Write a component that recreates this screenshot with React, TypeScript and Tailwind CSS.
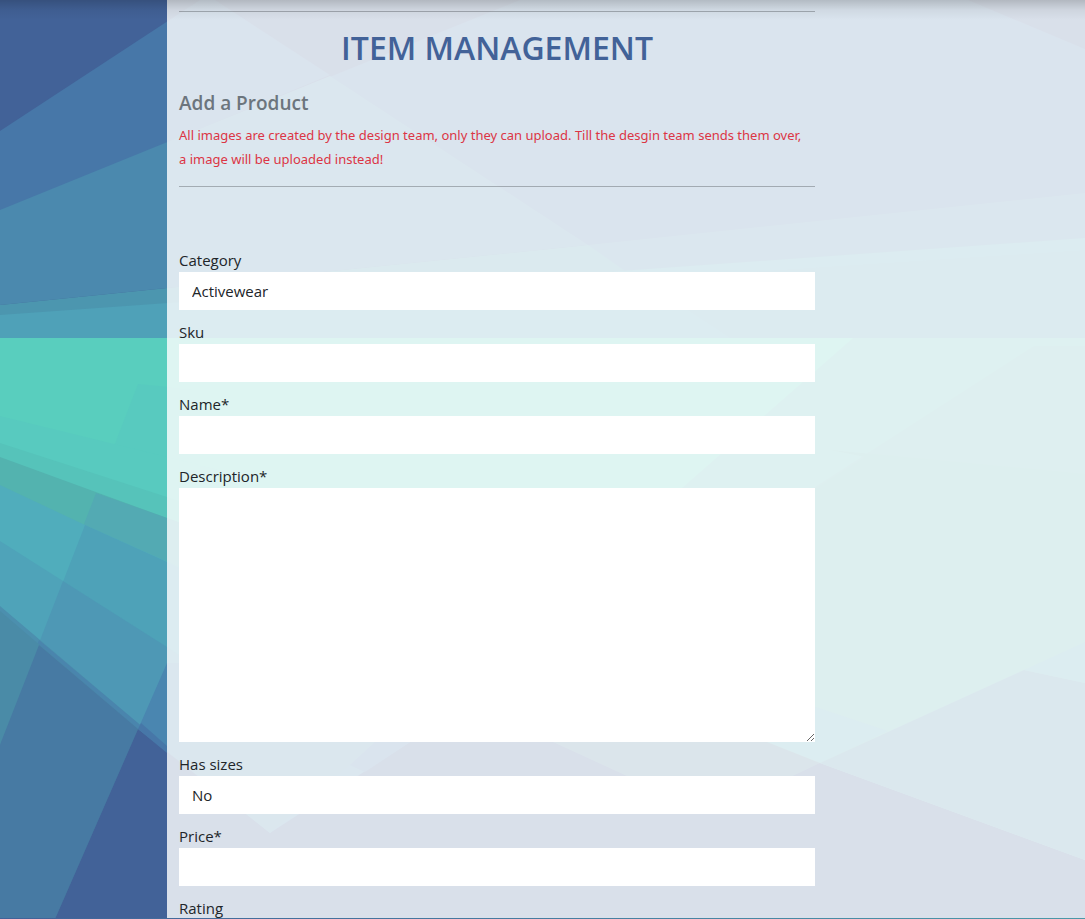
import type { ReactNode } from "react";

const shards: [string, string][] = [
  // upper fan
  ["#426298", "0,0 1085,0 1085,340 0,340"],
  ["#4777a8", "0,131 200,0 215,0 330,75 0,212"],
  ["#4777a8", "520,0 968,0 1085,49 1085,340 730,340 327,78"],
  ["#4b89ae", "0,210 330,76 588,245 0,305"],
  ["#4c89ae", "588,245 1085,193 1085,240 615,272"],
  ["#4c96af", "0,305 588,245 625,271 0,316"],
  ["#4fa1b8", "0,315 1085,238 1085,338 0,338"],
  ["#4f9cb6", "640,279 1085,250 1085,338 730,338"],
  // green core
  ["#59cebe", "0,338 1085,338 1085,919 0,919"],
  ["#5bbbb8", "853,338 1085,338 1085,919 600,919 600,560"],
  ["#5aafb2", "1034,346 1085,346 1085,919 500,919 500,690"],
  ["#57aeb0", "830,450 1085,474 1085,919 500,919 500,690 865,457"],
  // lower left rays
  ["#58cabf", "138,384 200,390 200,600 51,610"],
  ["#58cabf", "0,416 167,457 250,477 250,600 0,600"],
  ["#56c3ba", "0,443 167,497 250,524 250,600 0,600"],
  ["#53b3af", "0,457 167,518 500,640 500,919 0,919"],
  ["#53aab3", "96,493 167,518 500,640 500,919 -68,919"],
  ["#50adbc", "0,485 85,525 500,710 500,919 0,919"],
  ["#4ea2b8", "85,525 167,562 500,710 500,919 -68,919"],
  ["#4fa3b9", "0,541 63,581 500,859 500,919 0,919"],
  ["#4e98b5", "63,581 167,647 500,859 500,919 -68,919"],
  ["#4a86b0", "167,663 500,663 500,919 55,919"],
  ["#4c8fae", "0,606 139,724 272,836 272,919 0,919"],
  ["#4a85ad", "39,640 139,724 272,836 272,919 -68,919"],
  ["#4a8ba7", "0,611 138,729 270,833 270,919 0,919"],
  ["#477aa3", "39,645 138,729 55,919 -68,919"],
  ["#426298", "138,729 270,833 410,742 553,742 820,763 1085,860 1085,919 55,919"],
  // lower right
  ["#4b87ab", "270,833 190,768 190,742 410,742 365,771 350,765"],
  ["#4777a8", "138,729 141,723 167,746 167,753"],
  ["#4777a8", "410,742 365,772 350,765 375,742"],
  ["#57adae", "816,618 1024,670 820,763 767,700"],
  ["#50a4b8", "816,707 888,731 820,763 767,742"],
  ["#4d7f9b", "553,742 767,742 820,763 780,782 640,782"],
  ["#4d8bac", "1024,670 1085,683 1085,860 820,763"],
  ["#50a4b8", "1085,642 1085,683 1024,670"],
];

function Backdrop() {
  return (
    <svg
      aria-hidden="true"
      className="absolute inset-0 h-full w-full"
      viewBox="0 0 1085 919"
      preserveAspectRatio="none"
    >
      {shards.map(([fill, points], i) => (
        <polygon key={i} fill={fill} points={points} />
      ))}
    </svg>
  );
}

const control =
  "block w-full appearance-none rounded-none bg-white px-[13px] text-[#212529] outline-none";

function Field({ id, label, children }: { id: string; label: string; children: ReactNode }) {
  return (
    <div className="mb-[10px]">
      <label htmlFor={id} className="block">
        {label}
      </label>
      {children}
    </div>
  );
}

export default function App() {
  return (
    <div className="relative flex h-screen flex-col overflow-hidden font-['Open_Sans',sans-serif] text-[15px] leading-6 text-[#212529]">
      <Backdrop />
      <main className="relative ml-[167px] min-h-0 flex-1 overflow-hidden bg-white/80">
        <div className="max-w-[660px] px-3 pt-[11px]">
          <hr className="border-[#212529]/30" />
          <h1 className="mt-4 text-center text-[32px] leading-10 font-semibold text-[#426298]">
            ITEM MANAGEMENT
          </h1>
          <h2 className="mt-[23px] text-[19px] leading-6 font-semibold text-[#6c757d]">
            Add a Product
          </h2>
          <p className="mt-2 font-['Noto_Sans',sans-serif] text-[13px] text-[#dc3545]">
            All images are created by the design team, only they can upload. Till the desgin team
            sends them over, a&nbsp;image will be uploaded instead!
          </p>
          <hr className="mt-[15px] border-[#212529]/30" />
          <form className="mt-[61px]">
            <Field id="category" label="Category">
              <select id="category" className={`${control} h-[38px]`}>
                <option>Activewear</option>
              </select>
            </Field>
            <Field id="sku" label="Sku">
              <input id="sku" type="text" className={`${control} h-[38px]`} />
            </Field>
            <Field id="name" label="Name*">
              <input id="name" type="text" className={`${control} h-[38px]`} />
            </Field>
            <Field id="description" label="Description*">
              <textarea id="description" className={`${control} h-[254px] resize-y`} />
            </Field>
            <Field id="sizes" label="Has sizes">
              <select id="sizes" className={`${control} h-[38px]`}>
                <option>No</option>
                <option>Yes</option>
              </select>
            </Field>
            <Field id="price" label="Price*">
              <input id="price" type="text" className={`${control} h-[38px]`} />
            </Field>
            <Field id="rating" label="Rating">
              <input id="rating" type="text" className={`${control} h-[38px]`} />
            </Field>
          </form>
        </div>
      </main>
      <footer className="relative h-px shrink-0 bg-linear-to-r from-[#426298] to-[#4b98a8]" />
      <div className="pointer-events-none absolute inset-x-0 top-0 h-5 bg-linear-to-b from-black/18 via-black/5 to-transparent" />
    </div>
  );
}
